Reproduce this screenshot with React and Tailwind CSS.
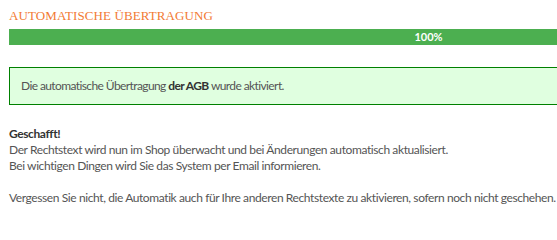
export default function App() {
	return (
		<div className="w-[557px] h-[215px] overflow-hidden bg-white">
			<div className="w-[848px] pl-[9px] pt-[7px] font-['Lato',sans-serif] text-[12px] leading-[16px] tracking-[-0.4px] text-[#555]">
				<h2 className="font-['Liberation_Serif',serif] text-[13px] leading-[18px] tracking-[0.1px] text-[#f27a34]">
					AUTOMATISCHE ÜBERTRAGUNG
				</h2>
				<div className="mt-[4px] flex h-[16px] items-center justify-center bg-[#4caf50] text-[11px] font-bold tracking-normal text-white">
					100%
				</div>
				<div className="mt-[22px] border border-[#008000] bg-[#e0ffe0] px-[11px] py-[10px] tracking-[-0.6px]">
					Die automatische Übertragung <strong className="font-bold text-[#333]">der AGB</strong> wurde aktiviert.
				</div>
				<div className="mt-[21px]">
					<strong className="font-bold text-[#333]">Geschafft!</strong>
					<br />
					Der Rechtstext wird nun im Shop überwacht und bei Änderungen automatisch aktualisiert.
					<br />
					Bei wichtigen Dingen wird Sie das System per Email informieren.
					<br />
					<br />
					Vergessen Sie nicht, die Automatik auch für Ihre anderen Rechtstexte zu aktivieren, sofern noch nicht geschehen.
				</div>
			</div>
		</div>
	);
}
